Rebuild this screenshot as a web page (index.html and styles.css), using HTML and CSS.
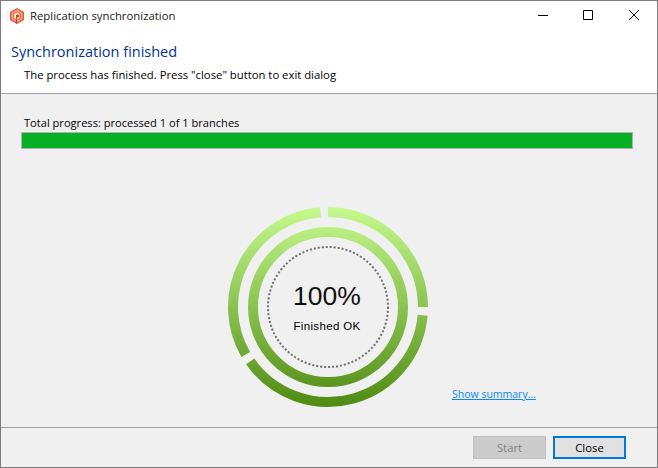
FILE: index.html
```html
<!DOCTYPE html>
<html lang="en">
<head>
<meta charset="utf-8">
<title>Replication synchronization</title>
<link rel="stylesheet" href="styles.css">
</head>
<body>
<div class="window">
  <div class="titlebar">
    <svg class="app-icon" width="16" height="16" viewBox="0 0 16 16">
      <path d="M8 0 15 4v8l-7 4-7-4V4z" fill="#ea5a2e"/>
      <path d="M8 1.8 13.4 4.9v6.2L8 14.2 2.6 11.1V4.9z" fill="#fbc3ab"/>
      <path d="M8 3 12.3 5.5v5L8 13 3.7 10.5v-5z" fill="#ee6a3c"/>
      <path d="M8 4.6 10.8 6.2v3.6L8 11.4 5.2 9.8V6.2z" fill="#fff"/>
      <path d="M6.9 6.4h2a1.5 1.5 0 0 1 0 3H8V15.5H6.9z" fill="#d9431c"/>
    </svg>
    <span class="title">Replication synchronization</span>
    <div class="controls">
      <svg class="ctl" width="46" height="30" viewBox="0 0 46 30"><path d="M19 14.5h10" stroke="#000" fill="none"/></svg>
      <svg class="ctl" width="46" height="30" viewBox="0 0 46 30"><path d="M18.5 9.5h9v9h-9z" stroke="#000" fill="none"/></svg>
      <svg class="ctl" width="46" height="30" viewBox="0 0 46 30"><path d="M18 9l10 10M28 9 18 19" stroke="#000" fill="none"/></svg>
    </div>
  </div>
  <header class="header">
    <h1 class="heading">Synchronization finished</h1>
    <p class="subtext">The process has finished. Press "close" button to exit dialog</p>
  </header>
  <main class="content">
    <div class="progress-label">Total progress: processed 1 of 1 branches</div>
    <div class="progress"><div class="progress-fill"></div></div>
    <div class="gauge-row">
      <div class="gauge">
        <svg class="rings" width="204" height="204" viewBox="-102 -102 204 204">
          <defs>
            <linearGradient id="ringGrad" gradientUnits="userSpaceOnUse" x1="0" y1="-100" x2="0" y2="100">
              <stop offset="0" stop-color="#c6fa8e"/>
              <stop offset="1" stop-color="#4f8a12"/>
            </linearGradient>
          </defs>
          <g fill="none" stroke="url(#ringGrad)" stroke-width="10">
            <path d="M0 -95A95 95 0 0 1 95 0"/>
            <path d="M94.64 8.28A95 95 0 0 1 -77.82 54.49"/>
            <path d="M-82.27 47.5A95 95 0 0 1 -7.45 -94.71"/>
            <circle r="75"/>
          </g>
          <circle r="60" fill="none" stroke="#707070" stroke-width="2" stroke-dasharray="2 2"/>
        </svg>
        <div class="gauge-text">
          <div class="percent">100%</div>
          <div class="status">Finished OK</div>
        </div>
      </div>
      <a class="summary" href="#">Show summary...</a>
    </div>
  </main>
  <footer class="footer">
    <button class="btn btn-disabled" disabled>Start</button>
    <button class="btn btn-default">Close</button>
  </footer>
</div>
</body>
</html>
```
FILE: styles.css
```css
* { box-sizing: border-box; }
html, body { margin: 0; padding: 0; }
body {
  width: 658px;
  height: 468px;
  overflow: hidden;
  font-family: "Open Sans", "Noto Sans", sans-serif;
  font-size: 11.3px;
  color: #000;
}
.window {
  width: 658px;
  height: 468px;
  display: flex;
  flex-direction: column;
  border: 1px solid #7c7c7c;
  background: #f0f0f0;
}
.titlebar {
  height: 30px;
  flex: none;
  display: flex;
  align-items: center;
  background: #fff;
  padding-left: 8px;
}
.app-icon { flex: none; }
.title {
  margin-left: 5px;
  margin-bottom: 2px;
  font-size: 11.35px;
  color: #1a1a1a;
}
.controls { margin-left: auto; display: flex; }
.ctl { display: block; }
.header {
  height: 63px;
  flex: none;
  background: #fff;
  border-bottom: 1px solid #a0a0a0;
  padding: 0 0 0 10px;
}
.heading {
  margin: 11px 0 0;
  font-size: 14.5px;
  font-weight: 400;
  line-height: 20px;
  color: #003399;
}
.subtext {
  margin: 5px 0 0 13px;
  line-height: 16px;
}
.content {
  flex: 1;
  min-height: 0;
  padding: 21px 24px 0 20px;
  display: flex;
  flex-direction: column;
}
.progress-label {
  margin-left: 3px;
  font-size: 11.1px;
  line-height: 16px;
  height: 15px;
}
.progress {
  height: 17px;
  margin-top: 2px;
  border: 1px solid #b2b2b2;
  background: #e6e6e6;
}
.progress-fill { height: 100%; width: 100%; background: #06b025; }
.gauge-row {
  flex: 1;
  display: flex;
  flex-direction: column;
  align-items: center;
  position: relative;
}
.gauge {
  display: grid;
  width: 204px;
  height: 204px;
  margin-top: 56px;
  margin-left: 1px;
}
.rings, .gauge-text { grid-area: 1 / 1; }
.rings { display: block; }
.gauge-text {
  display: flex;
  flex-direction: column;
  align-items: center;
  padding-top: 75px;
  padding-right: 1px;
}
.percent {
  font-family: "Liberation Sans", Arial, sans-serif;
  font-size: 26.5px;
  line-height: 32px;
  color: #111;
}
.status {
  margin-top: 6px;
  font-family: "Liberation Sans", Arial, sans-serif;
  font-size: 11.5px;
  letter-spacing: 0.35px;
  line-height: 16px;
}
.summary {
  position: absolute;
  left: 431px;
  top: 237px;
  font-size: 10.5px;
  line-height: 16px;
  color: #0a84ff;
  white-space: nowrap;
}
.footer {
  height: 40px;
  flex: none;
  border-top: 1px solid #a0a0a0;
  display: flex;
  justify-content: flex-end;
  align-items: flex-start;
  gap: 7px;
  padding: 8px 31px 0 0;
}
.btn {
  width: 73px;
  height: 23px;
  padding: 0;
  font: inherit;
  color: #000;
  background: #e1e1e1;
}
.btn-disabled { background: #cccccc; border: 1px solid #bfbfbf; color: #838383; }
.btn-default { border: 2px solid #0078d7; }
```
